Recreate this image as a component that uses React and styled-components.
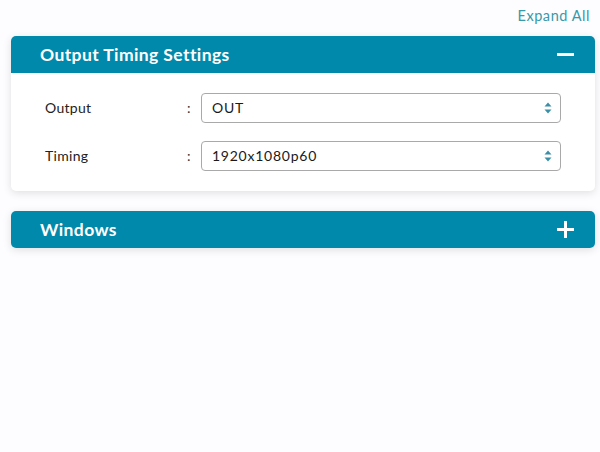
import React from "react";
import styled, { createGlobalStyle } from "styled-components";

const Global = createGlobalStyle`
  html, body { margin: 0; padding: 0; background: #fdfcfe; }
  body { font-family: "Lato", "Noto Sans", sans-serif; }
  * { box-sizing: border-box; }
`;

const Page = styled.div`
  width: 600px;
  height: 452px;
  padding: 6px 5px 0 11px;
  display: flex;
  flex-direction: column;
`;

const TopBar = styled.div`
  display: flex;
  justify-content: flex-end;
  height: 30px;
  padding-right: 5px;
`;

const ExpandLink = styled.a`
  color: #3799a9;
  font-size: 14.5px;
  letter-spacing: 0.55px;
  line-height: 20px;
  cursor: pointer;
`;

const Panel = styled.section`
  background: #fff;
  border-radius: 5px;
  box-shadow: 0 2px 8px rgba(0, 0, 0, 0.12);
  margin-bottom: 20px;
  overflow: hidden;
`;

const Header = styled.div`
  height: 37px;
  background: #0089ab;
  display: flex;
  align-items: center;
  justify-content: space-between;
  padding: 0 21px 0 29px;
  color: #fff;
`;

const Title = styled.h2`
  margin: 0;
  font-size: 17.5px;
  font-weight: 700;
  letter-spacing: 0.4px;
`;

const Body = styled.div`
  padding: 20px 34px 20px 34px;
  display: flex;
  flex-direction: column;
  gap: 18px;
`;

const Row = styled.div`
  display: grid;
  grid-template-columns: 142px 14px 1fr;
  align-items: center;
  height: 30px;
`;

const Label = styled.span`
  font-size: 14px;
  color: #222;
  letter-spacing: 0.3px;
  margin-top: -2px;
`;

const Colon = styled.span`
  font-size: 14px;
  color: #333;
  margin-top: -2px;
`;

const SelectBox = styled.div`
  height: 30px;
  border: 1px solid #a9a9a9;
  border-radius: 4px;
  display: flex;
  align-items: center;
  justify-content: space-between;
  padding: 0 8px 0 10px;
  font-size: 14px;
  color: #1a1a1a;
  letter-spacing: 0.75px;
`;

const Value = styled.span`
  margin-top: -2px;
`;

const Arrows = () => (
  <svg width="8" height="12" viewBox="0 0 8 12">
    <path d="M4 0.5 L7.5 4.5 L0.5 4.5 Z" fill="#3a8fa6" />
    <path d="M0.5 7.5 L7.5 7.5 L4 11.5 Z" fill="#3a8fa6" />
  </svg>
);

const Icon = ({ plus }) => (
  <svg width="17" height="17" viewBox="0 0 17 17">
    <rect x="0" y="7" width="17" height="3" fill="#fff" />
    {plus && <rect x="7" y="0" width="3" height="17" fill="#fff" />}
  </svg>
);

const Select = ({ value }) => (
  <SelectBox>
    <Value>{value}</Value>
    <Arrows />
  </SelectBox>
);

export default function App() {
  return (
    <>
      <Global />
      <Page>
        <TopBar>
          <ExpandLink>Expand All</ExpandLink>
        </TopBar>
        <Panel>
          <Header>
            <Title>Output Timing Settings</Title>
            <Icon />
          </Header>
          <Body>
            <Row>
              <Label>Output</Label>
              <Colon>:</Colon>
              <Select value="OUT" />
            </Row>
            <Row>
              <Label>Timing</Label>
              <Colon>:</Colon>
              <Select value="1920x1080p60" />
            </Row>
          </Body>
        </Panel>
        <Panel>
          <Header>
            <Title>Windows</Title>
            <Icon plus />
          </Header>
        </Panel>
      </Page>
    </>
  );
}
